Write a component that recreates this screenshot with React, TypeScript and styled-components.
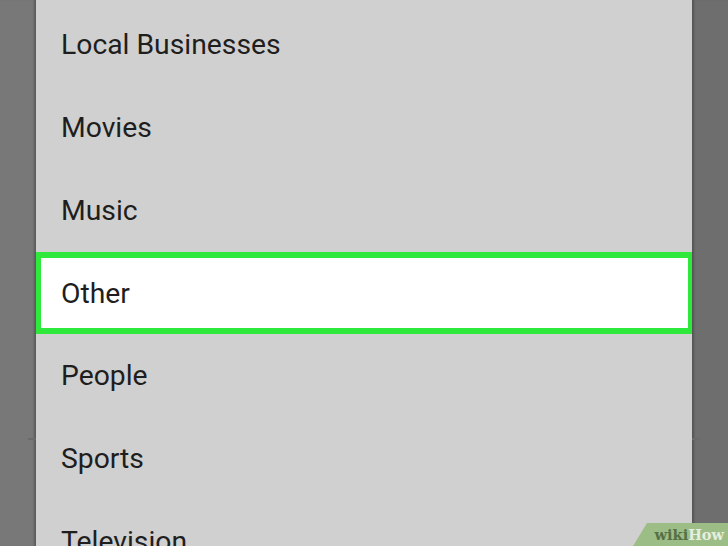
import React from "react";
import styled, { createGlobalStyle } from "styled-components";

const Global = createGlobalStyle`
  html, body { margin: 0; padding: 0; }
  body { font-family: Roboto, "Noto Sans", sans-serif; background: #747474; }
`;

const Screen = styled.div`
  position: relative;
  width: 728px;
  height: 546px;
  overflow: hidden;
  display: flex;
  background: #757575;
`;

const Side = styled.div<{ $right?: boolean }>`
  width: 36px;
  flex: none;
  background: ${(p) => (p.$right ? "#6e6e6e" : "#787878")};
  position: relative;
  box-shadow: ${(p) => (p.$right ? "inset 3px 0 2px -1px #555" : "inset -3px 0 2px -1px #5c5c5c")};
`;

const Rule = styled.div<{ $right?: boolean }>`
  position: absolute;
  top: 438px;
  ${(p) => (p.$right ? "left: 0;" : "right: 0;")}
  width: 8px;
  height: 2px;
  background: #6a6a6a;
`;

const Panel = styled.div`
  width: 656px;
  flex: none;
  background: #d0d0d0;
  padding-top: 3.65px;
  box-sizing: border-box;
  display: flex;
  flex-direction: column;
`;

const Item = styled.div<{ $selected?: boolean }>`
  height: 82.7px;
  flex: none;
  box-sizing: border-box;
  display: flex;
  align-items: center;
  padding-left: 25px;
  font-size: 28.3px;
  color: #1e1e1e;
  ${(p) =>
    p.$selected &&
    `
    background: #ffffff;
    border: 6px solid #2ee83c;
    margin: 0 -2px 0 -1px;
    padding-left: 20px;
  `}
`;

const Badge = styled.div`
  position: absolute;
  right: 0;
  bottom: 0;
  width: 95px;
  height: 23px;
  background: #9cbd86;
  clip-path: polygon(14px 0, 100% 0, 100% 100%, 0 100%);
  display: flex;
  align-items: center;
  justify-content: flex-end;
  padding-right: 4px;
  box-sizing: border-box;
  font-family: "DejaVu Serif", "Liberation Serif", serif;
  font-weight: bold;
  font-size: 14.5px;
`;

const Wiki = styled.span`
  color: #566f47;
`;

const How = styled.span`
  color: #e6eedf;
`;

const items = ["Local Businesses", "Movies", "Music", "Other", "People", "Sports", "Television"];

export default function App() {
  return (
    <Screen>
      <Global />
      <Side>
        <Rule />
      </Side>
      <Panel>
        {items.map((t) => (
          <Item key={t} $selected={t === "Other"}>
            {t}
          </Item>
        ))}
      </Panel>
      <Side $right>
        <Rule $right />
      </Side>
      <Badge>
        <Wiki>wiki</Wiki>
        <How>How</How>
      </Badge>
    </Screen>
  );
}
